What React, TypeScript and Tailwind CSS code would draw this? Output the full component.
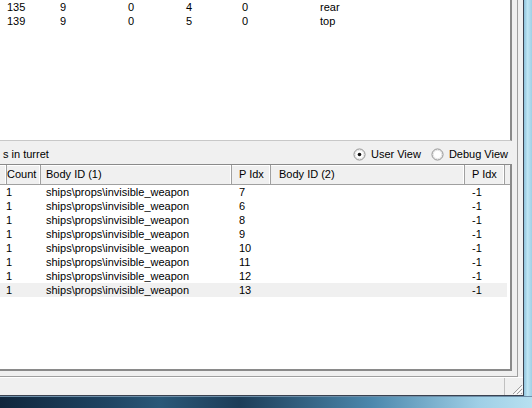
import React from "react";

const topRows = [
    { id: "135", a: "9", b: "0", c: "4", d: "0", side: "rear" },
    { id: "139", a: "9", b: "0", c: "5", d: "0", side: "top" },
];

const weaponIdx = [7, 6, 8, 9, 10, 11, 12, 13];

const bottomCols = "grid grid-cols-[3px_38px_191px_39px_194px_40px_1fr]";

const Radio = ({ checked }: { checked?: boolean }) => (
    <svg width="13" height="13" viewBox="0 0 13 13" className="shrink-0">
        <circle cx="6.5" cy="6.5" r="5.5" fill="#fff" stroke="#8a8a8a" />
        <circle cx="6.5" cy="6.5" r="4.3" fill="none" stroke="#e2e2e2" />
        {checked && <circle cx="6.5" cy="6.5" r="1.8" fill="#111" />}
    </svg>
);

const Grip = () => (
    <svg width="12" height="12" viewBox="0 0 12 12">
        <path d="M11 2L2 11M11 6L6 11M11 10L10 11" stroke="#a0a0a0" strokeWidth="1" />
        <path d="M12 3L3 12M12 7L7 12" stroke="#fff" strokeWidth="1" />
    </svg>
);

const HeadCell = ({ label, pad = "pl-[6px]" }: { label?: string; pad?: string }) => (
    <div className={`h-full ${pad} flex items-center border-r border-[#a0a0a0] shadow-[inset_-1px_0_0_#fff] whitespace-nowrap overflow-hidden`}>
        {label}
    </div>
);

const App = () => {
    return (
        <div className="w-[532px] h-[408px] overflow-hidden flex flex-col bg-[#1d3a55] text-[11px] text-black font-['Liberation_Sans',Arial,sans-serif]">
            <div className="flex h-[396px]">
                <div className="w-[524px] h-full flex flex-col bg-[#f0f0f0] border-r border-b border-[#3a4250]">
                    {/* splitter panel */}
                    <div className="w-[518px] h-[377px] flex flex-col border-r border-b border-[#a0a0a0]">
                        {/* upper list */}
                        <div className="w-[512px] h-[141px] bg-white border-r-2 border-b border-r-[#8a8a8a] border-b-[#c8c8c8]">
                            {topRows.map((r) => (
                                <div key={r.id} className="h-[14px] leading-[14px] grid grid-cols-[53px_68px_58px_56px_78px_1fr]">
                                    <div className="pl-[7px]">{r.id}</div>
                                    <div className="pl-[7px]">{r.a}</div>
                                    <div className="pl-[7px]">{r.b}</div>
                                    <div className="pl-[7px]">{r.c}</div>
                                    <div className="pl-[7px]">{r.d}</div>
                                    <div className="pl-[7px]">{r.side}</div>
                                </div>
                            ))}
                        </div>

                        {/* label + view toggle */}
                        <div className="h-[23px] w-[512px] pt-[4px] flex items-center justify-between pr-[4px]">
                            <span className="pl-[3px] whitespace-nowrap">s in turret</span>
                            <div className="flex items-center">
                                <Radio checked />
                                <span className="ml-[5px]">User View</span>
                                <span className="ml-[10px]"><Radio /></span>
                                <span className="ml-[5px]">Debug View</span>
                            </div>
                        </div>

                        {/* weapon list */}
                        <div className="w-[512px] h-[207px] bg-white border-t border-r-2 border-b-2 border-t-[#8a8a8a] border-r-[#8a8a8a] border-b-[#8a8a8a] flex flex-col">
                            <div className={`${bottomCols} h-[20px] bg-[#f0f0f0] border-b border-[#a0a0a0] shadow-[inset_0_1px_0_#fff]`}>
                                <HeadCell />
                                <HeadCell label="Count" pad="pl-[4px]" />
                                <HeadCell label="Body ID (1)" pad="pl-[5px]" />
                                <HeadCell label="P Idx" pad="pl-[7px]" />
                                <HeadCell label="Body ID (2)" pad="pl-[8px]" />
                                <HeadCell label="P Idx" pad="pl-[7px]" />
                                <div className="w-[4px] bg-[#f0f0f0]" />
                            </div>
                            <div className="w-[507px]">
                                {weaponIdx.map((n, i) => (
                                    <div
                                        key={n}
                                        className={`${bottomCols} h-[14px] leading-[14px] ${i === weaponIdx.length - 1 ? "bg-[#f0f0f0]" : ""}`}
                                    >
                                        <div />
                                        <div className="pl-[3px]">1</div>
                                        <div className="pl-[5px] whitespace-nowrap">ships\props\invisible_weapon</div>
                                        <div className="pl-[7px]">{n}</div>
                                        <div />
                                        <div className="pl-[7px]">-1</div>
                                        <div />
                                    </div>
                                ))}
                            </div>
                        </div>
                    </div>

                    {/* status bar */}
                    <div className="flex-1 flex items-stretch border-t border-white">
                        <div className="w-[505px] border-r border-[#c0c0c0]" />
                        <div className="flex-1 flex items-end justify-end">
                            <Grip />
                        </div>
                    </div>
                </div>
                {/* right glass frame */}
                <div className="flex-1 bg-[linear-gradient(90deg,#8fc3dc_0%,#bfe6f4_45%,#9fd0e6_100%)]" />
            </div>
            {/* bottom glass frame */}
            <div className="flex-1 bg-[linear-gradient(90deg,#10263c_0%,#1f4462_20%,#2a5878_30%,#1d3d58_45%,#4c88ad_70%,#9fcfe6_90%,#b7e0f0_100%)] shadow-[inset_0_1px_0_#6d8ea8]" />
        </div>
    );
};

export default App;
